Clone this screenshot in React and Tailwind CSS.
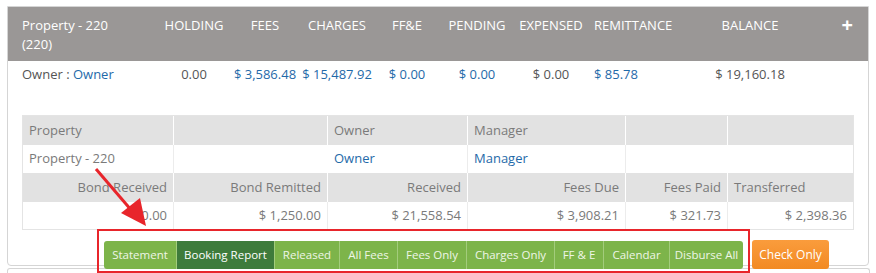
import React from 'react';

const headCols = [
    { label: 'HOLDING', w: 'w-[68px]', align: 'text-center' },
    { label: 'FEES', w: 'w-[74px]', align: 'text-center' },
    { label: 'CHARGES', w: 'w-[70px]', align: 'text-center' },
    { label: 'FF&E', w: 'w-[70px]', align: 'text-center' },
    { label: 'PENDING', w: 'w-[70px]', align: 'text-center' },
    { label: 'EXPENSED', w: 'w-[78px]', align: 'text-center' },
    { label: 'REMITTANCE', w: 'w-[110px]', align: 'text-left pl-[4px]' },
    { label: 'BALANCE', w: 'w-[100px]', align: 'text-center' },
];

const ownerVals = [
    { v: '0.00', link: false },
    { v: '$ 3,586.48', link: true },
    { v: '$ 15,487.92', link: true },
    { v: '$ 0.00', link: true },
    { v: '$ 0.00', link: true },
    { v: '$ 0.00', link: false },
    { v: '$ 85.78', link: true },
    { v: '$ 19,160.18', link: false },
];

const colW = ['w-[151px]', 'w-[154px]', 'w-[140px]', 'w-[158px]', 'w-[102px]', 'flex-1'];

const buttons = [
    { label: 'Statement', w: 'w-[72px]' },
    { label: 'Booking Report', w: 'w-[98px]' },
    { label: 'Released', w: 'w-[65px]' },
    { label: 'All Fees', w: 'w-[58px]' },
    { label: 'Fees Only', w: 'w-[69px]' },
    { label: 'Charges Only', w: 'w-[88px]' },
    { label: 'FF & E', w: 'w-[49px]' },
    { label: 'Calendar', w: 'w-[66px]' },
    { label: 'Disburse All', w: 'w-[74px]' },
];

const Cell = ({ i, className = '', children }) => (
    <div className={`${colW[i]} h-full px-[6px] flex items-center border-r border-[#ececec] last:border-r-0 ${className}`}>
        {children}
    </div>
);

const App = () => {
    return (
        <div className="relative w-[876px] h-[273px] bg-white overflow-hidden font-['Open_Sans',sans-serif] text-[13px]">
            <div className="pt-[6px] pl-[7px] w-[869px]">
                <div className="h-[260px] border border-[#d5d5d5] rounded-b-[4px] bg-white">
                    {/* summary header */}
                    <div className="h-[54px] bg-[#9a9796] text-white flex pl-[14px] pt-[9px] leading-[19px]">
                        <div className="w-[138px]">Property - 220<br />(220)</div>
                        {headCols.map(c => (
                            <div key={c.label} className={`${c.w} ${c.align}`}>{c.label}</div>
                        ))}
                        <div className="flex-1 flex justify-end pr-[15px] pt-[1px]">
                            <span className="text-[20px] font-bold leading-[16px]">+</span>
                        </div>
                    </div>
                    <div className="flex pl-[14px] pt-[4px] h-[28px] leading-[19px] text-[#555]">
                        <div className="w-[138px]">Owner : <span className="text-[#1f6aa9]">Owner</span></div>
                        {ownerVals.map((o, i) => (
                            <div key={i} className={`${headCols[i].w} ${headCols[i].align} ${o.link ? 'text-[#1f6aa9]' : ''}`}>{o.v}</div>
                        ))}
                    </div>

                    {/* detail table */}
                    <div className="ml-[14px] mt-[26px] w-[832px] border border-[#e4e4e4] text-[#7a7a7a]">
                        <div className="flex h-[29px] bg-[#e2e2e2]">
                            <Cell i={0} className="border-white">Property</Cell>
                            <Cell i={1} className="border-white" />
                            <Cell i={2} className="border-white">Owner</Cell>
                            <Cell i={3} className="border-white">Manager</Cell>
                            <Cell i={4} className="border-white" />
                            <Cell i={5} />
                        </div>
                        <div className="flex h-[28px] bg-white">
                            <Cell i={0}>Property - 220</Cell>
                            <Cell i={1} className="border-r-0" />
                            <Cell i={2} className="text-[#1f6aa9]">Owner</Cell>
                            <Cell i={3} className="text-[#1f6aa9]">Manager</Cell>
                            <Cell i={4} className="border-r-0" />
                            <Cell i={5} />
                        </div>
                        <div className="flex h-[29px] bg-[#e2e2e2]">
                            <Cell i={0} className="justify-end border-white">Bond Received</Cell>
                            <Cell i={1} className="justify-end border-white">Bond Remitted</Cell>
                            <Cell i={2} className="justify-end border-white">Received</Cell>
                            <Cell i={3} className="justify-end border-white">Fees Due</Cell>
                            <Cell i={4} className="justify-end border-white">Fees Paid</Cell>
                            <Cell i={5}>Transferred</Cell>
                        </div>
                        <div className="flex h-[27px] bg-white">
                            <Cell i={0} className="justify-end">0.00</Cell>
                            <Cell i={1} className="justify-end">$ 1,250.00</Cell>
                            <Cell i={2} className="justify-end">$ 21,558.54</Cell>
                            <Cell i={3} className="justify-end">$ 3,908.21</Cell>
                            <Cell i={4} className="justify-end">$ 321.73</Cell>
                            <Cell i={5} className="justify-end">$ 2,398.36</Cell>
                        </div>
                    </div>

                    {/* action buttons */}
                    <div className="flex items-center ml-[96px] mt-[10px] gap-[9px] text-[11.5px] whitespace-nowrap">
                        <div className="flex shrink-0 h-[28px] rounded-[3px] overflow-hidden">
                            {buttons.map(b => (
                                <div
                                    key={b.label}
                                    className={`${b.w} shrink-0 flex items-center justify-center border-l border-[#a3cc7c] first:border-l-0 ${b.label === 'Booking Report' ? 'bg-[#3e7b3b] text-white' : 'bg-[#7db44a] text-[#eef6e6]'}`}
                                >
                                    {b.label}
                                </div>
                            ))}
                        </div>
                        <div className="w-[77px] shrink-0 h-[29px] flex items-center justify-center rounded-[3px] text-white text-[12px] bg-gradient-to-b from-[#fa9c3c] to-[#f28a22]">
                            Check Only
                        </div>
                    </div>
                </div>
            </div>
            <div className="ml-[7px] mt-[2px] w-[863px] h-[10px] border-t border-x border-[#d5d5d5] rounded-t-[3px]" />

            {/* annotation overlay */}
            <div className="absolute left-[97px] top-[229px] w-[653px] h-[44px] border-2 border-[#e8252b]" />
            <svg className="absolute left-0 top-0" width="876" height="273">
                <line x1="96" y1="169" x2="132" y2="211" stroke="#e8252b" strokeWidth="3" />
                <polygon points="146,226 121,213 140,198" fill="#e8252b" />
            </svg>
        </div>
    );
};

export default App;
